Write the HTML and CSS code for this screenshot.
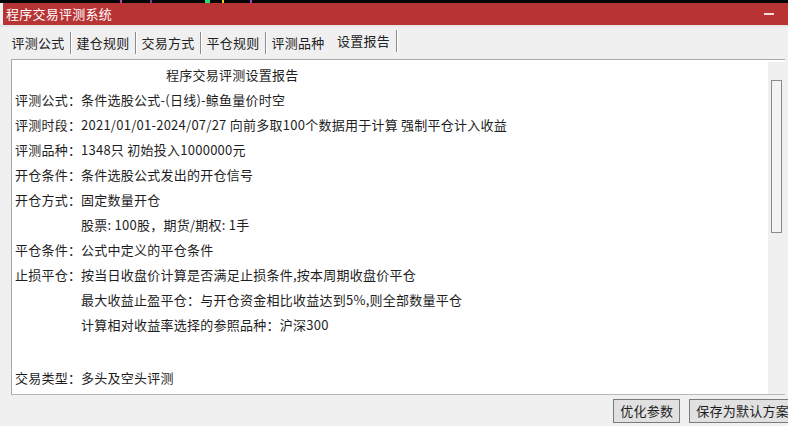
FILE: index.html
```html
<!DOCTYPE html>
<html lang="zh">
<head>
<meta charset="utf-8">
<title>程序交易评测系统</title>
<link rel="stylesheet" href="styles.css">
</head>
<body>
<div class="strip"></div>
<div class="win">
  <div class="titlebar">
    <span class="title">程序交易评测系统</span>
    <span class="min"></span>
  </div>
  <div class="tabs">
    <div class="tab">评测公式</div>
    <div class="tab">建仓规则</div>
    <div class="tab">交易方式</div>
    <div class="tab">平仓规则</div>
    <div class="tab nosep">评测品种</div>
    <div class="tab active">设置报告</div>
  </div>
  <div class="panel">
    <div class="report">
      <div class="rtitle">程序交易评测设置报告</div>
      <div class="row"><span class="lab">评测公式：</span><span>条件选股公式-(日线)-鲸鱼量价时空</span></div>
      <div class="row"><span class="lab">评测时段：</span><span>2021/01/01-2024/07/27 向前多取100个数据用于计算 强制平仓计入收益</span></div>
      <div class="row"><span class="lab">评测品种：</span><span>1348只 初始投入1000000元</span></div>
      <div class="row"><span class="lab">开仓条件：</span><span>条件选股公式发出的开仓信号</span></div>
      <div class="row"><span class="lab">开仓方式：</span><span>固定数量开仓</span></div>
      <div class="row"><span class="lab"></span><span>股票: 100股，期货/期权: 1手</span></div>
      <div class="row"><span class="lab">平仓条件：</span><span>公式中定义的平仓条件</span></div>
      <div class="row"><span class="lab">止损平仓：</span><span>按当日收盘价计算是否满足止损条件,按本周期收盘价平仓</span></div>
      <div class="row"><span class="lab"></span><span>最大收益止盈平仓：与开仓资金相比收益达到5%,则全部数量平仓</span></div>
      <div class="row"><span class="lab"></span><span>计算相对收益率选择的参照品种：沪深300</span></div>
      <div class="row blank"></div>
      <div class="row"><span class="lab">交易类型：</span><span>多头及空头评测</span></div>
    </div>
    <div class="scroll"><div class="thumb"></div></div>
  </div>
  <div class="buttons">
    <div class="btn">优化参数</div>
    <div class="btn">保存为默认方案</div>
  </div>
</div>
</body>
</html>
```

FILE: styles.css
```css
html, body {
  margin: 0;
  padding: 0;
}
body {
  width: 788px;
  height: 426px;
  overflow: hidden;
  background: #f0f0f0;
  font-family: "Noto Sans CJK SC", "Noto Sans", sans-serif;
  font-size: 13px;
  letter-spacing: 0.25px;
  color: #1e1e1e;
}
.strip {
  height: 3px;
  background:
    linear-gradient(90deg, transparent 0 120px, #c040c0 120px 122px, transparent 122px 150px, #7a3aa0 150px 152px, transparent 152px 205px, #20e080 205px 210px, transparent 210px 222px, #e0d020 222px 224px, transparent 224px 250px, #a040c0 250px 252px, transparent 252px),
    #050505;
}
.win {
  margin-left: 3px;
}
.titlebar {
  height: 22px;
  background: #b83434;
  color: #fff;
  display: flex;
  align-items: center;
  justify-content: space-between;
  padding-left: 3px;
}
.title {
  line-height: 22px;
}
.min {
  width: 10px;
  height: 2px;
  background: #f4dede;
  margin-right: 14px;
}
.tabs {
  margin-left: -3px;
  border-top: 2px solid #e6e6e6;
  height: 32px;
  display: flex;
  align-items: center;
  padding-left: 6px;
}
.tab {
  padding: 0 5.5px;
  line-height: 22px;
  border-right: 1px solid #8c8c8c;
  box-shadow: 1px 0 0 #ffffff;
  color: #222;
}
.tab.nosep {
  border-right-color: transparent;
  box-shadow: none;
}
.tab.active {
  margin-top: -4px;
  margin-left: 0.5px;
}
.panel {
  margin-left: 8px;
  width: 773px;
  height: 334px;
  background: #fff;
  border-top: 1px solid #a8a8a8;
  border-left: 1px solid #a8a8a8;
  border-bottom: 1px solid #b8b8b8;
  display: flex;
  overflow: hidden;
}
.report {
  flex: 1;
  padding-top: 2px;
  padding-left: 3px;
}
.rtitle {
  line-height: 25px;
  padding-left: 151px;
}
.row {
  display: flex;
  line-height: 25px;
  height: 25px;
  white-space: nowrap;
}
.row.blank {
  height: 28px;
}
.lab {
  width: 66px;
  flex-shrink: 0;
}
.scroll {
  width: 17px;
  margin-top: 2px;
  background: #f0f0f0;
  padding-top: 18px;
  box-sizing: border-box;
}
.thumb {
  width: 9px;
  height: 151px;
  margin-left: 3px;
  border: 1px solid #8a8a8a;
  background: #f3f3f3;
}
.buttons {
  display: flex;
  justify-content: flex-end;
  gap: 9px;
  margin-top: 4px;
  margin-right: -8px;
}
.btn {
  flex-shrink: 0;
  height: 22px;
  line-height: 22px;
  padding: 0 6px;
  background: #e1e1e1;
  border: 1px solid #7a7a7a;
  color: #1e1e1e;
}
```
